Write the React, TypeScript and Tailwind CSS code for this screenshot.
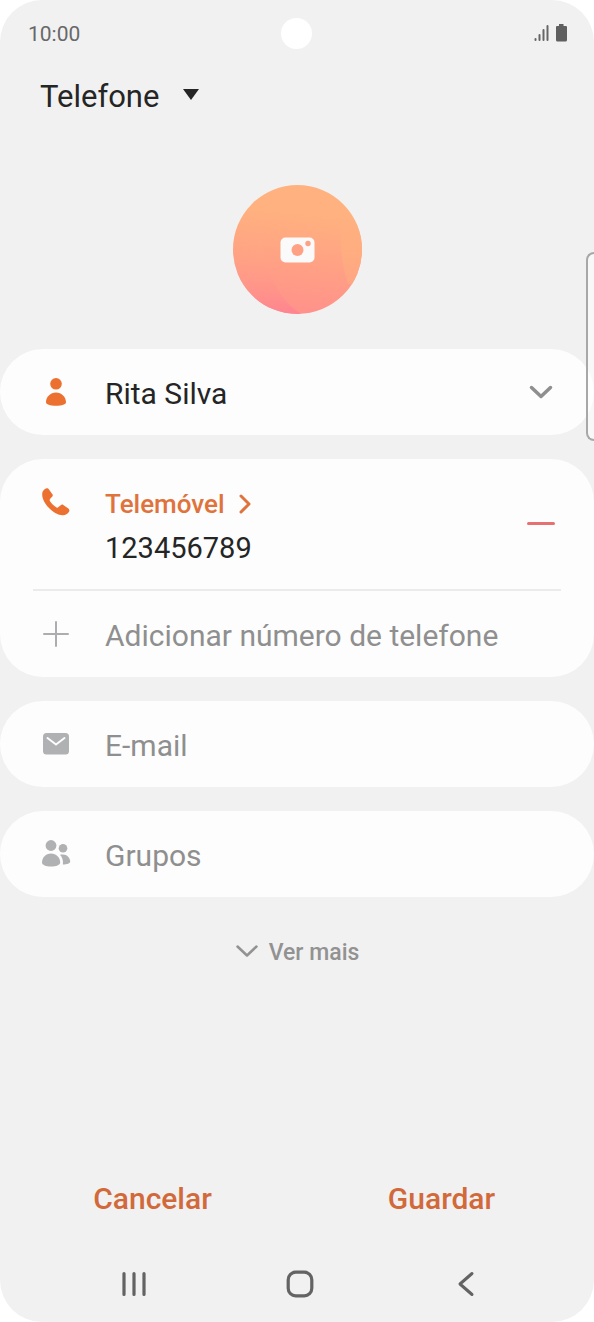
import { useState } from "react";
import type { ReactNode } from "react";

const card = "rounded-[43px] bg-[#fdfdfd] px-[33px]";
const field =
  "min-w-0 flex-1 bg-transparent pt-[3px] text-left text-[30px] leading-10 outline-none placeholder:text-[#8f8f8f] placeholder:opacity-100";

function StatusBar() {
  return (
    <div className="grid h-[66px] grid-cols-3 items-center px-[26px] text-[#686868]">
      <span className="pt-0.5 pl-0.5 text-[21px] leading-6">10:00</span>
      <span className="size-[31px] justify-self-center rounded-full bg-white"></span>
      <svg
        className="justify-self-end"
        width="34"
        height="18"
        viewBox="0 0 34 18"
        fill="none"
        stroke="#666"
        strokeWidth="2"
        strokeLinecap="round"
      >
        <path d="M1.500 16v-1M5.500 16v-5M9.500 16V6M13.500 16V2" />
        <path
          d="M25 0h4.500v1.500q0 .5 .5 .5h2q1 0 1 1v13q0 1.500-1.500 1.500h-8Q22 17.500 22 16V3q0-1 1-1h1.500q.5 0 .5-.5z"
          fill="#5f5f5f"
          stroke="none"
        />
      </svg>
    </div>
  );
}

function Chevron({ weight }: { weight: number }) {
  return (
    <svg
      className="block"
      width="24"
      height="14"
      viewBox="0 0 24 14"
      fill="none"
      stroke="currentColor"
      strokeWidth={weight}
      strokeLinecap="round"
      strokeLinejoin="round"
    >
      <path d="M2.500 2.500 12 11.500l9.500-9" />
    </svg>
  );
}

function IconSlot({ children }: { children: ReactNode }) {
  return (
    <svg
      className="mr-[34px] ml-2 shrink-0"
      width="30"
      height="30"
      viewBox="0 0 30 30"
      fill="none"
    >
      {children}
    </svg>
  );
}

function PersonIcon() {
  return (
    <IconSlot>
      <circle cx="15" cy="6.800" r="5.800" fill="#ec7030" />
      <path
        d="M15 15.500c-5.600 0-10 4.500-10 9.800 0 2 4 3.500 10 3.500s10-1.500 10-3.500c0-5.300-4.400-9.800-10-9.800z"
        fill="#ec7030"
      />
    </IconSlot>
  );
}

function PhoneIcon() {
  return (
    <IconSlot>
      <path
        d="M1.200 7.200C1.200 4.200 3.500 1.600 5.700 1.300c1-.1 1.700.4 2.300 1.300l3.400 4.600c.7 1 .5 1.800-.3 2.600l-1.900 2c-.8.900-.7 1.700 0 2.700 1.400 2.100 3.300 4 5.600 5.600 1 .7 1.900.7 2.700 0l2.200-1.900c.8-.7 1.700-.8 2.600-.2l4.700 3.300c1.400 1 1.700 2 1 3.400-1.300 2.200-3.700 3.600-6.500 3.500-4.300-.1-9.300-2.900-13.200-7C4 16.900 1.100 11.800 1.200 7.200z"
        fill="#ec7030"
      />
    </IconSlot>
  );
}

function PlusIcon() {
  return (
    <IconSlot>
      <path d="M15 3v24M3 15h24" stroke="#adadaf" strokeWidth="2" strokeLinecap="round" />
    </IconSlot>
  );
}

function MailIcon() {
  return (
    <IconSlot>
      <rect x="2" y="4" width="26" height="21.500" rx="3.500" fill="#b0b1b3" />
      <path
        d="m6.500 9 8.500 6.500L23.500 9"
        stroke="#fdfdfd"
        strokeWidth="2"
        strokeLinecap="round"
        strokeLinejoin="round"
      />
    </IconSlot>
  );
}

function GroupIcon() {
  return (
    <IconSlot>
      <g fill="#b0b1b3">
        <circle cx="10" cy="6.500" r="5.400" />
        <circle cx="22" cy="9.200" r="4.300" />
        <path d="M10 14.500c-5.200 0-9 4-9 9 0 2.500 4 4 9 4s9.200-1.500 9.200-4c0-5-4-9-9.200-9z" />
        <path d="M19 15.800c.8-.3 1.900-.4 3-.4 4 0 7.200 3.400 7.200 7 0 1.900-3 3-7.400 3.100.6-3.700-.4-7.200-2.800-9.700z" />
      </g>
    </IconSlot>
  );
}

function PhotoButton() {
  return (
    <button type="button" aria-label="Adicionar foto" className="rounded-full">
      <svg width="129" height="129" viewBox="0 0 129 129">
        <defs>
          <linearGradient id="base" x1="0.55" y1="0" x2="0.45" y2="1">
            <stop offset="0.2" stopColor="#ffb27f" />
            <stop offset="0.6" stopColor="#ffa184" />
            <stop offset="1" stopColor="#ff918b" />
          </linearGradient>
          <linearGradient id="left" x1="0.5" y1="0" x2="0.5" y2="1">
            <stop offset="0.3" stopColor="#ffaf80" stopOpacity="0" />
            <stop offset="1" stopColor="#ff8490" />
          </linearGradient>
          <linearGradient id="right" x1="0.5" y1="0" x2="0.5" y2="1">
            <stop offset="0" stopColor="#ffb27f" stopOpacity="0" />
            <stop offset="0.5" stopColor="#ffae80" />
            <stop offset="1" stopColor="#ffa583" />
          </linearGradient>
          <clipPath id="round">
            <circle cx="64.500" cy="64.500" r="64.500" />
          </clipPath>
        </defs>
        <g clipPath="url(#round)">
          <path d="M0 0h129v129H0z" fill="url(#base)" />
          <path d="M0 20h28C26 68 38 110 68 129H0z" fill="url(#left)" />
          <path d="M108 26h21v73h-14c-7-22-9-45-7-73z" fill="url(#right)" />
        </g>
        <rect x="47.500" y="52.500" width="34" height="25" rx="5" fill="#fafafa" />
        <circle cx="64.500" cy="65" r="6" fill="#ffa184" />
        <circle cx="75" cy="58.500" r="2.700" fill="#ffa184" />
      </svg>
    </button>
  );
}

function NavBar() {
  return (
    <nav className="grid h-[76px] grid-cols-3 place-items-center pr-[45px] pl-[51px] text-[#636363]">
      <button type="button" aria-label="Recentes">
        <svg width="28" height="28" viewBox="0 0 28 28" stroke="currentColor" strokeWidth="3.200" strokeLinecap="round">
          <path d="M4 3.500v21M14 3.500v21M24 3.500v21" />
        </svg>
      </button>
      <button type="button" aria-label="Início">
        <svg width="28" height="28" viewBox="0 0 28 28" fill="none" stroke="currentColor" strokeWidth="3.200">
          <rect x="2.200" y="2.200" width="23.600" height="23.600" rx="7.500" />
        </svg>
      </button>
      <button type="button" aria-label="Voltar">
        <svg
          width="28"
          height="28"
          viewBox="0 0 28 28"
          fill="none"
          stroke="currentColor"
          strokeWidth="3"
          strokeLinecap="round"
          strokeLinejoin="round"
        >
          <path d="M20 3.500 8 14 20 24.500" />
        </svg>
      </button>
    </nav>
  );
}

export default function App() {
  const [name, setName] = useState("Rita Silva");
  const [phone, setPhone] = useState("123456789");
  const [email, setEmail] = useState("");

  return (
    <div className="bg-white">
      <div className="relative flex min-h-screen flex-col overflow-hidden rounded-[42px] bg-[#f1f1f1] font-['Roboto',sans-serif] text-[#252525]">
        <StatusBar />

        <header className="flex h-[60px] items-center px-10">
          <select
            aria-label="Guardar em"
            className="field-sizing-content appearance-none bg-transparent pt-0.5 text-[31px] leading-10 outline-none"
          >
            <option>Telefone</option>
          </select>
          <svg className="pointer-events-none -mt-1 ml-6" width="16" height="11" viewBox="0 0 16 11">
            <path d="M0 0h16L8 11z" fill="#252525" />
          </svg>
        </header>

        <main className="flex flex-1 flex-col">
          <div className="flex h-[223px] items-end justify-center pb-[35px]">
            <PhotoButton />
          </div>

          <form className="flex flex-col gap-6">
            <div className={`${card} flex h-[86px] items-center`}>
              <PersonIcon />
              <input
                aria-label="Nome"
                value={name}
                onChange={(e) => setName(e.target.value)}
                className={field}
              />
              <button type="button" aria-label="Mais campos do nome" className="mr-2 text-[#8f8f8f]">
                <Chevron weight={3.5} />
              </button>
            </div>

            <div className={card}>
              <div className="flex items-center border-b-2 border-[#ebebeb] pt-6 pb-5">
                <div className="self-start pt-1">
                  <PhoneIcon />
                </div>
                <div className="flex min-w-0 flex-1 flex-col">
                  <button
                    type="button"
                    className="flex items-center gap-3.5 self-start text-[26px] leading-[42px] font-medium text-[#e0733c]"
                  >
                    Telemóvel
                    <svg
                      width="12"
                      height="20"
                      viewBox="0 0 12 20"
                      fill="none"
                      stroke="currentColor"
                      strokeWidth="3"
                      strokeLinecap="round"
                      strokeLinejoin="round"
                    >
                      <path d="m2 2 8 8-8 8" />
                    </svg>
                  </button>
                  <input
                    type="tel"
                    aria-label="Número de telemóvel"
                    value={phone}
                    onChange={(e) => setPhone(e.target.value)}
                    className="min-w-0 bg-transparent pt-0.5 text-[29px] leading-[42px] outline-none"
                  />
                </div>
                <button type="button" aria-label="Remover número" className="mr-1.5 pb-1.5">
                  <span className="block h-[3px] w-7 rounded-full bg-[#e77072]"></span>
                </button>
              </div>
              <button type="button" className="flex h-[86px] w-full items-center text-[#8f8f8f]">
                <PlusIcon />
                <span className={field}>Adicionar número de telefone</span>
              </button>
            </div>

            <div className={`${card} flex h-[86px] items-center`}>
              <MailIcon />
              <input
                type="email"
                aria-label="E-mail"
                placeholder="E-mail"
                value={email}
                onChange={(e) => setEmail(e.target.value)}
                className={field}
              />
            </div>

            <button type="button" className={`${card} flex h-[86px] items-center text-[#8f8f8f]`}>
              <GroupIcon />
              <span className={field}>Grupos</span>
            </button>
          </form>

          <button
            type="button"
            className="mt-[34px] flex items-center gap-2.5 self-center text-[23px] leading-9 font-medium text-[#929292]"
          >
            <Chevron weight={2.5} />
            <span className="pt-1">Ver mais</span>
          </button>
        </main>

        <footer>
          <div className="mb-4 grid h-16 grid-cols-2 place-items-center px-2 text-[30px] font-medium text-[#d2693a]">
            <button type="button">Cancelar</button>
            <button type="button">Guardar</button>
          </div>
          <NavBar />
        </footer>

        {/* edge panel handle */}
        <div className="absolute top-[252px] right-0 h-[189px] w-2 rounded-l-lg border-2 border-r-0 border-[#a8a8a8] bg-white/50"></div>
      </div>
    </div>
  );
}
